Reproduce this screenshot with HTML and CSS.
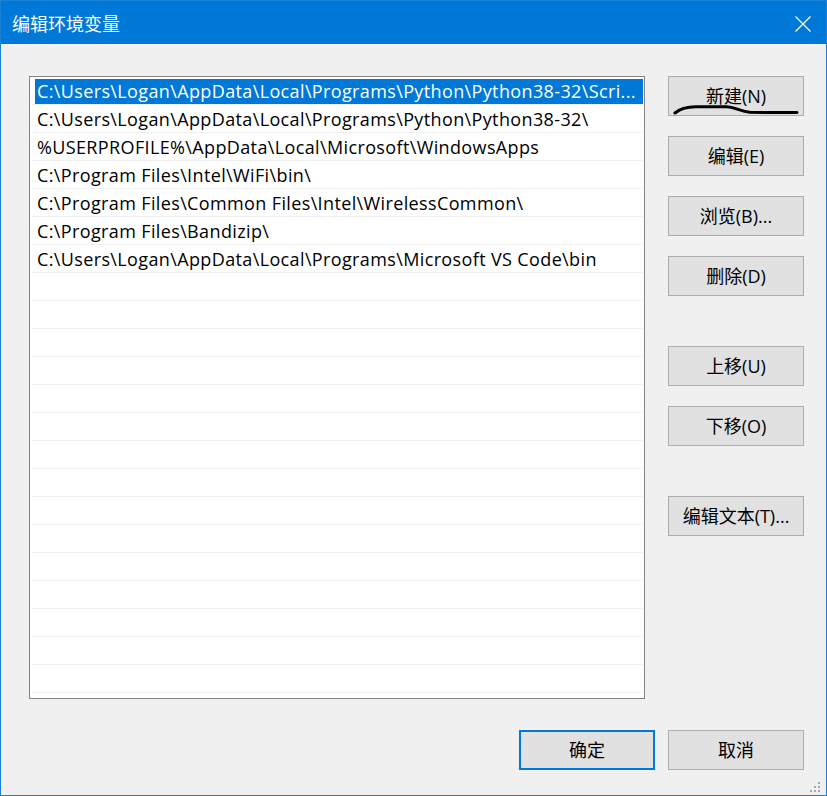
FILE: index.html
```html
<!DOCTYPE html>
<html lang="zh-CN">
<head>
<meta charset="utf-8">
<title>编辑环境变量</title>
<link rel="stylesheet" href="styles.css">
</head>
<body>
<div class="window">
  <div class="titlebar">
    <span class="title">编辑环境变量</span>
    <svg class="close" width="16" height="16" viewBox="0 0 16 16"><path d="M0.5 0.5 L15.5 15.5 M15.5 0.5 L0.5 15.5" stroke="#fff" stroke-width="1.2" fill="none"/></svg>
  </div>
  <div class="main">
    <div class="list">
      <div class="row"><span class="cell selected">C:\Users\Logan\AppData\Local\Programs\Python\Python38-32\Scri...</span></div>
      <div class="row"><span class="cell">C:\Users\Logan\AppData\Local\Programs\Python\Python38-32\</span></div>
      <div class="row"><span class="cell">%USERPROFILE%\AppData\Local\Microsoft\WindowsApps</span></div>
      <div class="row"><span class="cell">C:\Program Files\Intel\WiFi\bin\</span></div>
      <div class="row"><span class="cell">C:\Program Files\Common Files\Intel\WirelessCommon\</span></div>
      <div class="row"><span class="cell">C:\Program Files\Bandizip\</span></div>
      <div class="row"><span class="cell">C:\Users\Logan\AppData\Local\Programs\Microsoft VS Code\bin</span></div>
      <div class="row"></div><div class="row"></div><div class="row"></div><div class="row"></div><div class="row"></div>
      <div class="row"></div><div class="row"></div><div class="row"></div><div class="row"></div><div class="row"></div>
      <div class="row"></div><div class="row"></div><div class="row"></div><div class="row"></div><div class="row"></div>
    </div>
    <div class="side">
      <div class="btn marked">新建(N)<svg class="scribble" width="136" height="40" viewBox="0 0 136 40"><path d="M7 37 C11 33.5 18 31 28 30.8 L58 30.8 C66 30.8 72 35 82 36.3 L129 36.6" stroke="#000" stroke-width="3" fill="none" stroke-linecap="round"/></svg></div>
      <div class="btn">编辑(E)</div>
      <div class="btn">浏览(B)...</div>
      <div class="btn">删除(D)</div>
      <div class="btn group">上移(U)</div>
      <div class="btn">下移(O)</div>
      <div class="btn group">编辑文本(T)...</div>
    </div>
  </div>
  <div class="footer">
    <div class="btn default">确定</div>
    <div class="btn">取消</div>
  </div>
  <svg class="grip" width="12" height="12" viewBox="0 0 12 12" fill="#a8a8a8">
    <rect x="8" y="0" width="2" height="2"/>
    <rect x="4" y="4" width="2" height="2"/><rect x="8" y="4" width="2" height="2"/>
    <rect x="0" y="8" width="2" height="2"/><rect x="4" y="8" width="2" height="2"/><rect x="8" y="8" width="2" height="2"/>
  </svg>
</div>
</body>
</html>
```
FILE: styles.css
```css
html, body {
  margin: 0;
  padding: 0;
  background: #f0f0f0;
}
body {
  font-family: "Open Sans", "Noto Sans CJK SC", sans-serif;
  font-size: 18px;
  color: #000;
}
.window {
  position: relative;
  width: 827px;
  height: 796px;
  box-sizing: border-box;
  border: 1px solid #1a80d8;
  background: #f0f0f0;
}
.titlebar {
  height: 43px;
  background: #0078d7;
  color: #fff;
  display: flex;
  align-items: center;
  padding-left: 11px;
  padding-right: 15px;
}
.title {
  font-family: "Noto Sans CJK SC", sans-serif;
  font-size: 18px;
  line-height: 24px;
}
.close {
  margin-left: auto;
  margin-top: 2px;
}
.main {
  display: flex;
  gap: 23px;
  padding: 32px 0 0 28px;
}
.list {
  width: 616px;
  height: 623px;
  box-sizing: border-box;
  border: 1px solid #838383;
  background: #fff;
  padding: 0 1px 0 2px;
  overflow: hidden;
}
.row {
  height: 28px;
  box-sizing: border-box;
  border-bottom: 1px solid #f0f0f0;
  padding-top: 2px;
}
.cell {
  display: block;
  margin-left: 3px;
  height: 25px;
  line-height: 25px;
  padding: 0 0 0 2px;
  white-space: nowrap;
  letter-spacing: 0.37px;
}
.cell.selected {
  background: #0078d7;
  color: #fff;
}
.side {
  display: flex;
  flex-direction: column;
  gap: 20px;
  width: 136px;
}
.btn {
  position: relative;
  width: 136px;
  height: 40px;
  box-sizing: border-box;
  border: 1px solid #adadad;
  background: #e1e1e1;
  display: flex;
  align-items: center;
  justify-content: center;
  font-size: 18px;
  line-height: 24px;
  color: #000;
}
.btn.group {
  margin-top: 30px;
}
.scribble {
  position: absolute;
  left: -1px;
  top: -1px;
  overflow: visible;
}
.footer {
  display: flex;
  justify-content: flex-end;
  gap: 13px;
  margin-top: 31px;
  padding-right: 22px;
}
.btn.default {
  border: 2px solid #0078d7;
}
.grip {
  position: absolute;
  right: 4px;
  bottom: 1px;
}
```
